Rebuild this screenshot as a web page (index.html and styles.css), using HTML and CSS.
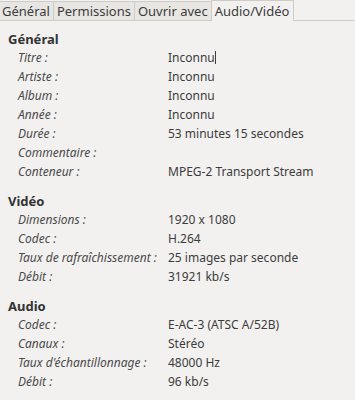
FILE: index.html
```html
<!DOCTYPE html>
<html lang="fr">

<head>
  <meta charset="UTF-8">
  <title>Propriétés</title>
  <link rel="stylesheet" href="styles.css">
</head>

<body>
  <div class="tabs">
    <div class="tab">Général</div>
    <div class="tab">Permissions</div>
    <div class="tab">Ouvrir avec</div>
    <div class="tab active">Audio/Vidéo</div>
    <div class="tab-fill"></div>
  </div>

  <div class="page">
    <div class="section">
      <h2>Général</h2>
      <div class="row"><span class="label">Titre :</span><span class="value">Inconnu<span class="cursor"></span></span></div>
      <div class="row"><span class="label">Artiste :</span><span class="value">Inconnu</span></div>
      <div class="row"><span class="label">Album :</span><span class="value">Inconnu</span></div>
      <div class="row"><span class="label">Année :</span><span class="value">Inconnu</span></div>
      <div class="row"><span class="label">Durée :</span><span class="value">53 minutes 15 secondes</span></div>
      <div class="row"><span class="label">Commentaire :</span><span class="value"></span></div>
      <div class="row"><span class="label">Conteneur :</span><span class="value">MPEG-2 Transport Stream</span></div>
    </div>

    <div class="section">
      <h2>Vidéo</h2>
      <div class="row"><span class="label">Dimensions :</span><span class="value">1920 x 1080</span></div>
      <div class="row"><span class="label">Codec :</span><span class="value">H.264</span></div>
      <div class="row"><span class="label">Taux de rafraîchissement :</span><span class="value">25 images par seconde</span></div>
      <div class="row"><span class="label">Débit :</span><span class="value">31921 kb/s</span></div>
    </div>

    <div class="section">
      <h2>Audio</h2>
      <div class="row"><span class="label">Codec :</span><span class="value">E-AC-3 (ATSC A/52B)</span></div>
      <div class="row"><span class="label">Canaux :</span><span class="value">Stéréo</span></div>
      <div class="row"><span class="label">Taux d'échantillonnage :</span><span class="value">48000 Hz</span></div>
      <div class="row"><span class="label">Débit :</span><span class="value">96 kb/s</span></div>
    </div>
  </div>
</body>

</html>
```

FILE: styles.css
```css
body {
  margin: 0;
  background-color: #f2f1f0;
  color: #3c3c3c;
  font-family: "Noto Sans", "Liberation Sans", sans-serif;
  font-size: 12px;
  overflow: hidden;
}

.tabs {
  display: flex;
  height: 21px;
}

.tab {
  display: flex;
  align-items: center;
  padding: 0 3px;
  margin-top: 1px;
  background-color: #e8e6e3;
  border: 1px solid #cfccc7;
  border-left: none;
  font-size: 13px;
  color: #3c3c3c;
}

.tab:first-child {
  padding-left: 2px;
}

.tab.active {
  margin-top: 0;
  background-color: #f2f1f0;
  border-bottom: none;
  border-left: 1px solid #cfccc7;
  margin-left: -1px;
  padding: 0 4px 0 3px;
}

.tab-fill {
  flex: 1;
  border-bottom: 1px solid #cfccc7;
}

.page {
  padding: 10px 0 0 8px;
}

.section {
  margin-bottom: 12px;
}

h2 {
  margin: 0;
  font-size: 13px;
  font-weight: bold;
  height: 17px;
  line-height: 17px;
  color: #333;
}

.row {
  display: flex;
  height: 19px;
  line-height: 19px;
  padding-left: 10px;
}

.label {
  width: 150px;
  font-style: italic;
  color: #4a4a4a;
}

.value {
  color: #3c3c3c;
}

.cursor {
  display: inline-block;
  width: 1px;
  height: 13px;
  background: #3c3c3c;
  vertical-align: -2px;
}
```
